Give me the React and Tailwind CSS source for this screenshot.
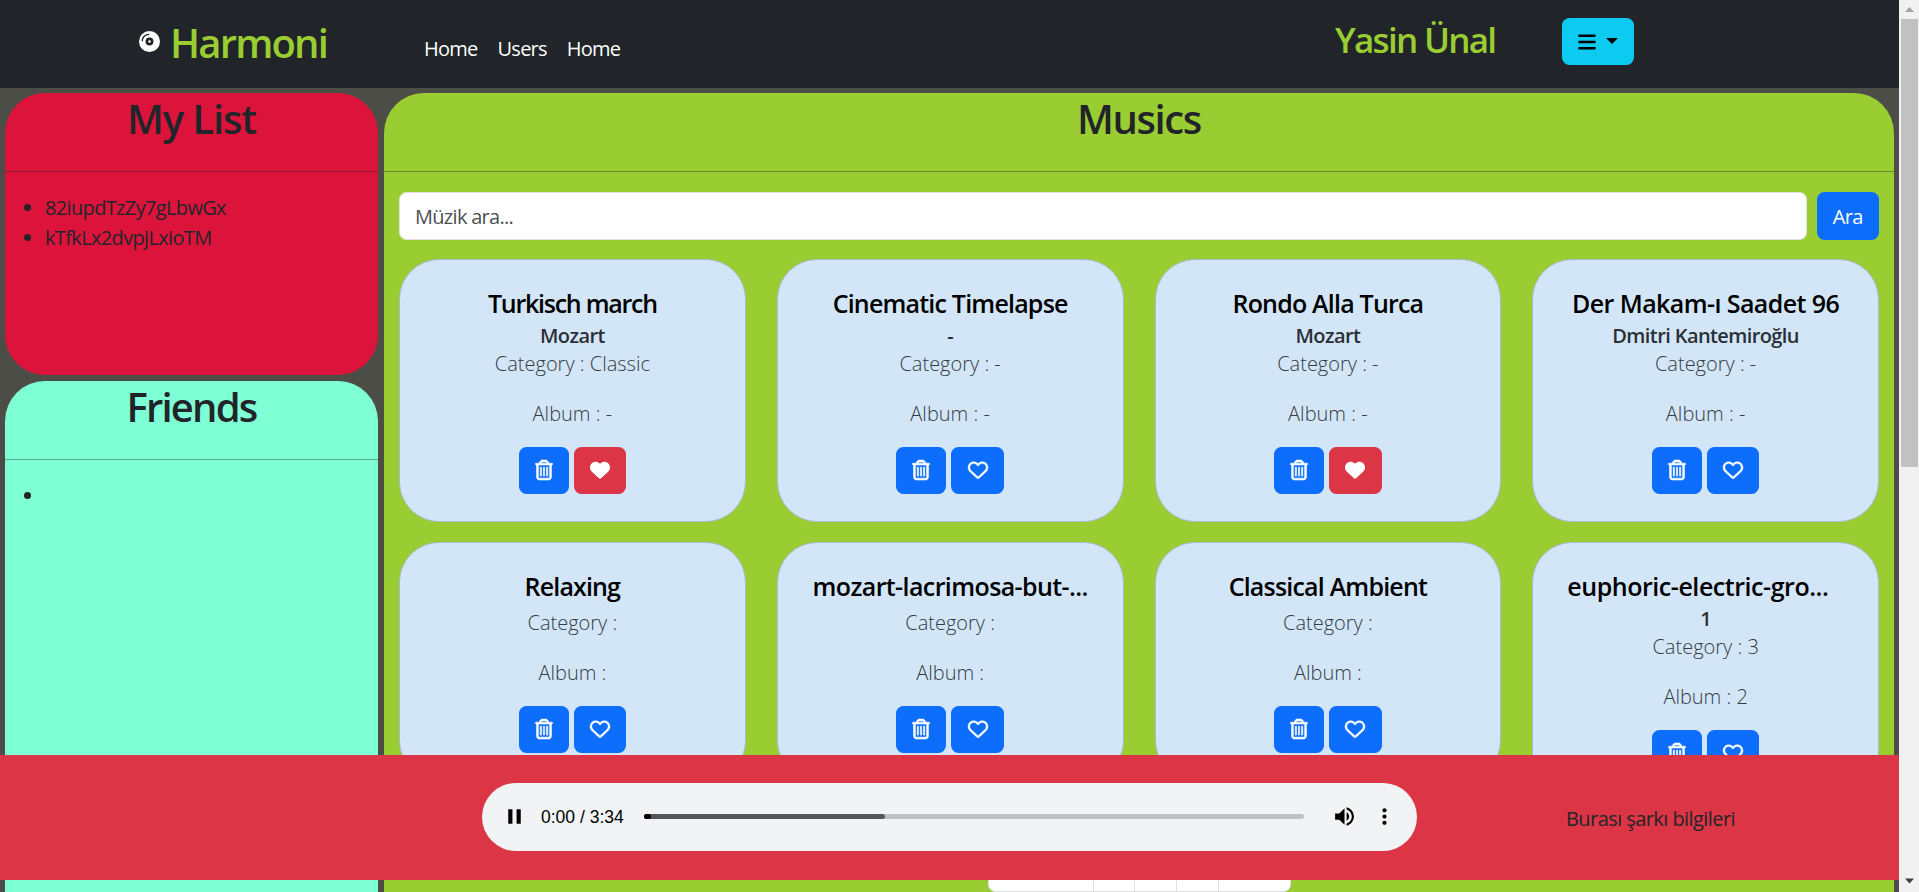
import { FaBars, FaCompactDisc, FaHeart, FaRegHeart, FaRegTrashCan } from "react-icons/fa6";
import { MdMoreVert, MdPause, MdVolumeUp } from "react-icons/md";

const songs = [
  { title: "Turkisch march", artist: "Mozart", category: "Classic", album: "-", liked: true, tracking: "tracking-[-1.25px]" },
  { title: "Cinematic Timelapse", artist: "-", category: "-", album: "-", tracking: "tracking-[-0.8px]" },
  { title: "Rondo Alla Turca", artist: "Mozart", category: "-", album: "-", liked: true, tracking: "tracking-[-0.8px]" },
  { title: "Der Makam-ı Saadet 96", artist: "Dmitri Kantemiroğlu", category: "-", album: "-", tracking: "tracking-[-0.58px]" },
  { title: "Relaxing", tracking: "tracking-[-0.85px]" },
  { title: "mozart-lacrimosa-but-...", tracking: "tracking-[-0.6px]" },
  { title: "Classical Ambient", tracking: "tracking-[-0.8px]" },
  { title: "euphoric-electric-gro...", artist: "1", category: "3", album: "2", tracking: "self-start tracking-[-0.45px]" },
];

function SongCard({ song }) {
  return (
    <article className="flex flex-col items-center rounded-[40px] border border-[#a9b8d6] bg-[#d3e6f8] px-[34px] pt-[28px] pb-[26.5px]">
      <h5 className={`mb-[6px] h-[30px] text-[25px] leading-[30px] font-semibold whitespace-nowrap text-black ${song.tracking}`}>
        {song.title}
      </h5>
      {song.artist && (
        <h6 className="h-6 text-[20px] leading-6 font-semibold tracking-[-0.6px] text-[#2a3036]">{song.artist}</h6>
      )}
      <p className="mt-px mb-5 text-[20px] leading-[30px] font-light text-[#343c45]">Category : {song.category}</p>
      <p className="mb-[18px] text-[20px] leading-[30px] font-light text-[#343c45]">Album : {song.album}</p>
      <div className="flex gap-[5px] text-[20px] text-white">
        <button className="flex h-[47.5px] w-[50px] items-center justify-center rounded-[7.5px] bg-[#0d6efd]">
          <FaRegTrashCan className="overflow-visible stroke-white [stroke-width:14]" />
        </button>
        <button
          className={`flex h-[47.5px] w-[52.5px] items-center justify-center rounded-[7.5px] ${song.liked ? "bg-[#dc3545]" : "bg-[#0d6efd]"}`}
        >
          {song.liked ? <FaHeart /> : <FaRegHeart className="overflow-visible stroke-white [stroke-width:10]" />}
        </button>
      </div>
    </article>
  );
}

function PanelTitle({ children, className }) {
  return (
    <h1 className={`h-[78px] shrink-0 pt-[2px] text-center text-[40px] leading-[48px] font-semibold text-[#212529] ${className}`}>
      {children}
    </h1>
  );
}

function Rule() {
  return <hr className="h-px shrink-0 border-0 bg-[#212529]/40" />;
}

function Navbar() {
  return (
    <header className="flex h-[88px] shrink-0 bg-[#212529]">
      <div className="flex w-[424px] pl-[139px]">
        <FaCompactDisc className="mt-[31px] mr-[10px] size-[21px] text-white" />
        <h1 className="mt-[19px] text-[40px] leading-[48px] font-semibold tracking-[-1.8px] text-[#9acd32]">Harmoni</h1>
      </div>
      <nav className="flex w-[911px] gap-5 pt-[34px] text-[20px] leading-[30px] tracking-[-0.75px] text-white">
        <a>Home</a>
        <a>Users</a>
        <a>Home</a>
      </nav>
      <h2 className="w-[227px] pt-[19px] text-[35px] leading-[42px] font-semibold tracking-[-1.7px] text-[#9acd32]">Yasin Ünal</h2>
      <button className="mt-[17.500px] flex h-[47.5px] w-[72px] rounded-[7.5px] bg-[#0dcaf0] pt-[14px] pl-[14.500px] text-[20px] text-black">
        <FaBars />
        <svg className="mt-[6px] ml-[9.500px] h-[6px] w-[12px]" viewBox="0 0 12 6">
          <path d="M0 0h12L6 6z" fill="currentColor" />
        </svg>
      </button>
    </header>
  );
}

function Player() {
  return (
    <footer className="absolute top-[755px] left-0 flex h-[125px] w-full bg-[#dc3545]">
      <div className="mt-[28px] ml-[482px] flex h-[68px] w-[935px] items-center rounded-full bg-[#f1f3f4] pb-px pl-[20px] text-black">
        <MdPause className="size-[25px]" />
        <span className="ml-[14px] w-[103px] font-['Liberation_Sans',sans-serif] text-[17.5px] leading-5">0:00 / 3:34</span>
        <div className="h-[5px] w-[660px] rounded-full bg-[#bfc1c2]">
          <div className="h-full w-[241px] rounded-full bg-[#555657]">
            <div className="h-full w-[7px] rounded-full bg-black" />
          </div>
        </div>
        <MdVolumeUp className="ml-[28px] size-[25px]" />
        <MdMoreVert className="ml-[15px] size-[25px]" />
      </div>
      <p className="mt-[49px] ml-[149px] text-[20px] leading-[30px] tracking-[-0.57px] text-[#212529]">Burası şarkı bilgileri</p>
    </footer>
  );
}

function Scrollbar() {
  return (
    <div className="flex w-5 shrink-0 flex-col items-center bg-[#f1f1f1]">
      <svg className="h-[19px] w-4" viewBox="0 0 16 19">
        <path d="M4 12l4.500-5 4.500 5z" fill="#a3a3a3" />
      </svg>
      <div className="h-[448px] w-[17px] bg-[#c1c1c1]" />
      <svg className="mt-auto h-[19px] w-4" viewBox="0 0 16 19">
        <path d="M4 5.500l4.500 5 4.500-5z" fill="#404040" />
      </svg>
    </div>
  );
}

export default function App() {
  return (
    <div className="flex h-[892px] w-[1919px] overflow-hidden font-['Open_Sans','Noto_Sans',sans-serif]">
      <div className="relative flex w-[1899px] flex-col overflow-hidden bg-[#4d4d48]">
        <Navbar />
        <main className="flex min-h-0 flex-1 gap-[6px] pt-[5px] pr-[5px] pl-[5px]">
          <aside className="flex w-[373px] flex-col gap-[6px]">
            <section className="flex h-[282px] shrink-0 flex-col rounded-[40px] bg-[#dc143c]">
              <PanelTitle className="tracking-[-1.1px]">My List</PanelTitle>
              <Rule />
              <ul className="mt-[21px] list-disc pl-[40px] text-[20px] leading-[30px] tracking-[-0.65px] text-[#212529]">
                <li>82iupdTzZy7gLbwGx</li>
                <li>kTfkLx2dvpjLxioTM</li>
              </ul>
            </section>
            <section className="flex flex-1 flex-col rounded-t-[40px] bg-[#7fffd4]">
              <PanelTitle className="tracking-[-1.8px]">Friends</PanelTitle>
              <Rule />
              <ul className="mt-[21px] list-disc pl-[40px] text-[20px] leading-[30px] text-[#212529]">
                <li />
              </ul>
            </section>
          </aside>
          <section className="flex w-[1510px] flex-col rounded-t-[40px] bg-[#9acd32]">
            <PanelTitle className="tracking-[-1.4px]">Musics</PanelTitle>
            <Rule />
            <div className="mt-5 flex h-[47.5px] shrink-0 gap-[10px] px-[15px]">
              <label className="flex flex-1 items-center rounded-[7.5px] border border-[#dee2e6] bg-white px-[15px] pt-[2px] text-[20px] tracking-[-0.7px] text-[#4a4f54]">
                Müzik ara...
              </label>
              <button className="w-[62.500px] rounded-[7.5px] bg-[#0d6efd] pt-[2px] text-[20px] tracking-[-0.7px] text-white">Ara</button>
            </div>
            <div className="mt-[19px] grid grid-cols-4 items-start gap-x-[31px] gap-y-5 px-[15px]">
              {songs.map((song) => (
                <SongCard key={song.title} song={song} />
              ))}
            </div>
          </section>
        </main>
        <div className="absolute top-[842px] left-[988px] grid h-[50px] w-[303px] grid-cols-[105px_41px_42px_42px_73px] overflow-hidden rounded-[7.5px] border border-[#dee2e6] bg-white">
          <span className="border-r border-[#dee2e6]" />
          <span className="border-r border-[#dee2e6]" />
          <span className="border-r border-[#dee2e6]" />
          <span className="border-r border-[#dee2e6]" />
        </div>
        <Player />
      </div>
      <Scrollbar />
    </div>
  );
}
